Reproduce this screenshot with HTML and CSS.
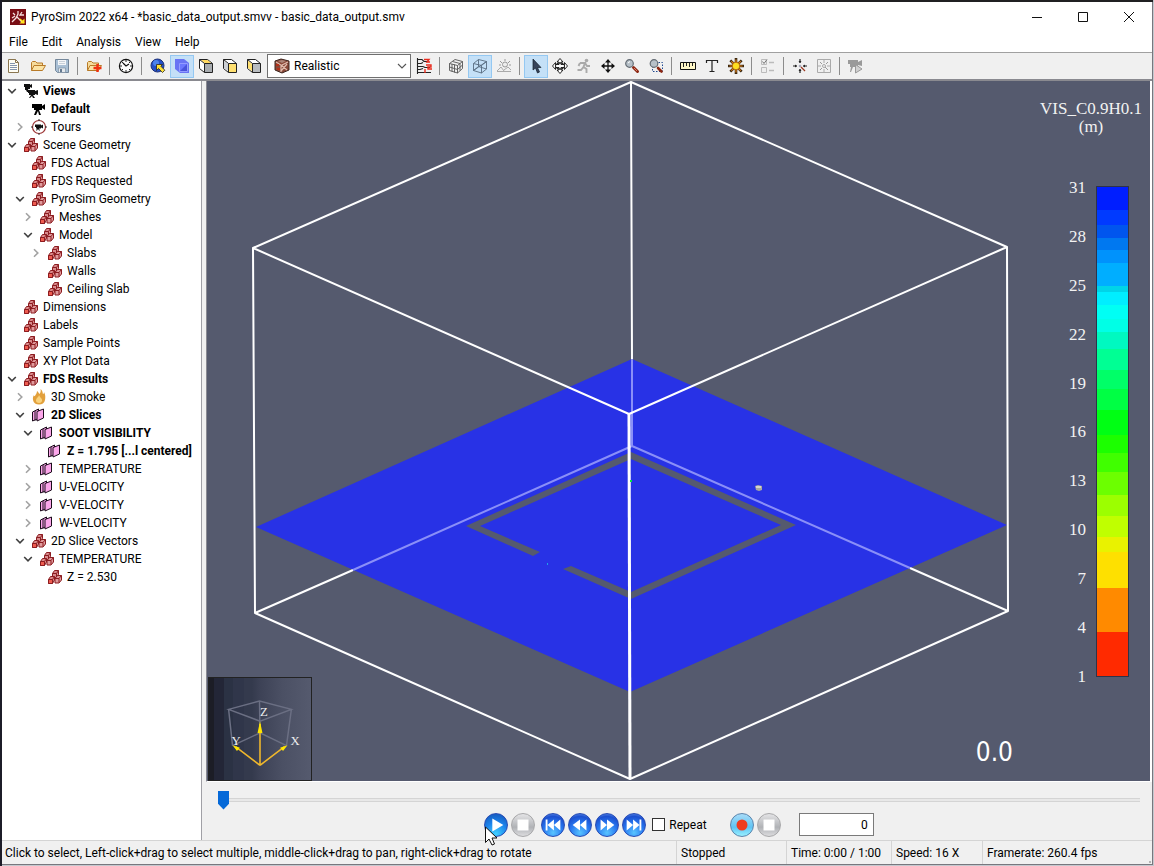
FILE: index.html
```html
<!DOCTYPE html>
<html lang="en">
<head>
<meta charset="utf-8">
<title>PyroSim 2022 x64</title>
<link rel="stylesheet" href="styles.css">
</head>
<body>
<svg class="defs" aria-hidden="true">
  <symbol id="cubes" viewBox="0 0 16 16">
    <g stroke="#8c1c20" stroke-width="1" stroke-linejoin="round">
      <path d="M5.500 4.500 7.500 1.500H11.500V5.500L9.500 8.500H5.500z" fill="#d88a8c"/><path d="M5.500 4.500h4v4M9.500 4.500l2-3" fill="none"/>
      <path d="M8 9.500 10.500 6.500H14.500V11L12 14H8z" fill="#e09a9c"/><path d="M8 9.500h4v4M12 9.500l2.500-3" fill="none"/>
      <path d="M1.500 10.500 3.500 7.500H7.500V11L5.500 14.500H1.500z" fill="#dc8c8c"/><path d="M1.500 10.500h4v4h-4z" fill="#ee5c50"/><path d="M5.500 10.500l2-3" fill="none"/>
    </g>
  </symbol>
  <symbol id="slice" viewBox="0 0 16 16">
    <g fill="#fba6ea" stroke="#1c0c1c" stroke-width="1" stroke-linejoin="round"><path d="M1.500 5 7.500 2v9.500L1.500 14z"/><path d="M6 4.500 12.500 2v9L6 14z"/><path d="M4 4v9.500" fill="none"/></g>
  </symbol>
  <symbol id="cam" viewBox="0 0 16 16">
    <path d="M1 3h10v2l3-2v6l-3-2v2H8l2 5H8L7 10l-2 4H3l2-5H3V7H1z" fill="currentColor"/>
  </symbol>
  <symbol id="cams" viewBox="0 0 16 16">
    <path d="M1 1h6v1l2-1v4L7 4v2H5l1 3H4L3 7H2V4H1z" fill="#111"/><path d="M5 7h7v1l3-1v5l-3-1v1h-2l2 3h-2l-1-2-2 2H6l2-3H6v-2H5z" fill="#111"/>
  </symbol>
  <symbol id="tour" viewBox="0 0 16 16">
    <circle cx="8" cy="8" r="6.500" fill="#fff" stroke="#9c3434" stroke-width="1.200"/><path d="M8 0v2M8 14v2M0 8h2M14 8h2" stroke="#333"/><path d="M4 5.500h6v1l2-1v4l-2-1v1H8l1 2H8L7 10l-1 1.500H5l1-2H5V8H4z" fill="#111"/>
  </symbol>
  <symbol id="flame" viewBox="0 0 16 16">
    <path d="M3 6c0 2 1 1 1.500 0S6 4 6 2c1.500 1 1.500 2 2.500 3C9.500 4 10 2 9.500 0 12 2 11.500 4 12 5c.7 0 1-1 1-2 1.500 3 1.500 5 1 8-.5 3-3 4.500-6 4.500S2.500 14 2 11c-.3-2 0-3.500 1-5z" fill="#e2a03c"/>
    <path d="M8 6c0 2-3 3-3 5.500C5 13 6 14 8 14s3.500-1.500 3-3.500C10.500 9 8.500 8 8 6z" fill="#f9d27c"/>
  </symbol>
  <symbol id="open" viewBox="0 0 10 10"><path d="M1.200 3 5 6.800 8.800 3" fill="none" stroke="#404040" stroke-width="1.600"/></symbol>
  <symbol id="shut" viewBox="0 0 10 10"><path d="M3 1.200 6.800 5 3 8.800" fill="none" stroke="#a2a2a2" stroke-width="1.600"/></symbol>
  <symbol id="folder" viewBox="0 0 16 16">
    <path d="M1.500 12.500v-8l1-1h3l1.500 1.500h5.500v2.500" fill="#f6dc9c" stroke="#b87a28"/><path d="M1.500 12.500 4 7.500h11.500l-3 5z" fill="#fbe3a4" stroke="#b87a28" stroke-linejoin="round"/>
  </symbol>
  <symbol id="box" viewBox="0 0 16 16">
    <path d="M1.500 1.500h8l5 4v9h-8l-5-4z" fill="#fff" stroke="#222" stroke-linejoin="round"/>
  </symbol>
</svg>

<main class="window">
  <header class="title">
    <svg class="logo" viewBox="0 0 16 16"><path d="M0 0h16v16H0z" fill="#780c14"/><path d="M8 2v3L6 9l-4 4M7 8l3 3 2 2M3 4l2 2M12 3l-2 3h4M2 9l3-2" fill="none" stroke="#f4dede" stroke-width="1.300"/><path d="M14.500 9.500v5h-5z" fill="#ffe41c"/><path d="m10 10 4 4" stroke="#ffe41c" stroke-width="1.500"/></svg>
    <h1>PyroSim 2022 x64 - *basic_data_output.smvv - basic_data_output.smv</h1>
    <button aria-label="Minimize"><svg viewBox="0 0 12 12"><path d="M1 6.500h10"/></svg></button>
    <button aria-label="Maximize"><svg viewBox="0 0 12 12"><path d="M1.500 1.500h9v9h-9z"/></svg></button>
    <button aria-label="Close"><svg viewBox="0 0 12 12"><path d="m1 1 10 10M11 1 1 11"/></svg></button>
  </header>
  <nav class="menu"><button>File</button><button>Edit</button><button>Analysis</button><button>View</button><button>Help</button></nav>

  <div class="tools" role="toolbar">
    <button aria-label="New"><svg viewBox="0 0 16 16"><path d="M2.500 1.500h7l3 3v10h-10z" fill="#fffdf4" stroke="#8a7650"/><path d="M9.500 1.500v3h3" fill="none" stroke="#8a7650"/><path d="M4 5.500h5M4 7.500h7M4 9.500h7M4 11.500h7" stroke="#8494ac"/></svg></button>
    <button aria-label="Open"><svg viewBox="0 0 16 16"><use href="#folder"/></svg></button>
    <button aria-label="Save"><svg viewBox="0 0 16 16"><path d="M1.500 1.500h13v13h-11l-2-2z" fill="#a9bfd4" stroke="#74879a"/><path d="M4 2h8v5H4z" fill="#f4f6f8"/><path d="M4.500 10h7v4.500h-7z" fill="#e4e8ec" stroke="#74879a" stroke-width=".6"/><path d="M5 3.500h6M5 5.500h6" stroke="#b4c0cc" stroke-width=".7"/><path d="M6 11h2v3H6z" fill="#657a90"/></svg></button>
    <i></i>
    <button aria-label="Import"><svg viewBox="0 0 16 16"><use href="#folder"/><path d="M11.500 6v8M7.500 10h8" stroke="#f03010" stroke-width="2.500"/></svg></button>
    <i></i>
    <button aria-label="Time"><svg viewBox="0 0 16 16"><circle cx="8" cy="8" r="6.600" fill="#fff" stroke="#111" stroke-width="1.200"/><path d="M8 2v2M8 12v2M2 8h2M12 8h2M4 4l1 1M11 11l1 1M12 4l-1 1M4 12l1-1" stroke="#222"/><path d="M5 5l3 3 3-2" fill="none" stroke="#111" stroke-width="1.200"/></svg></button>
    <i></i>
    <button aria-label="Reset view"><svg viewBox="0 0 16 16"><circle cx="7.500" cy="7.500" r="6.500" fill="#2450c8" stroke="#1c3078"/><circle cx="6" cy="5" r="3" fill="#4c82ec"/><path d="M6.500 6.500h6L10.800 8.200l4 4-2.300 2.300-4-4-2 2z" fill="#ffe138" stroke="#222" stroke-width=".8"/></svg></button>
    <button class="on" aria-label="Shaded"><svg viewBox="0 0 16 16"><path d="M1 1h9l5 4v10H6l-5-4z" fill="#6974f4"/><path d="M5.500 5.500h8v8h-8z" fill="#4853dc" stroke="#939cff"/><path d="M6 6h7l-7 7z" fill="#6c78ff"/></svg></button>
    <button aria-label="Top"><svg viewBox="0 0 16 16"><use href="#box"/><path d="M3 2h6.500L13 5H6.500z" fill="#ffd860"/><path d="M7 6h7v8H7z" fill="#a8acb0"/><path d="M1.500 1.500l5 4h8M6.500 5.500v9" fill="none" stroke="#222"/></svg></button>
    <button aria-label="Front"><svg viewBox="0 0 16 16"><use href="#box"/><path d="M7 6h7v8H7z" fill="#ffe070"/><path d="M2 2.500l4 3.500v7l-4-3z" fill="#ccd0d4"/><path d="M1.500 1.500l5 4h8M6.500 5.500v9" fill="none" stroke="#222"/></svg></button>
    <button aria-label="Side"><svg viewBox="0 0 16 16"><use href="#box"/><path d="M2 2.500l4 3.500v7l-4-3z" fill="#ffe070"/><path d="M7 6h7v8H7z" fill="#b8bcc0"/><path d="M1.500 1.500l5 4h8M6.500 5.500v9" fill="none" stroke="#222"/></svg></button>
    <div class="combo">
      <svg class="brick" viewBox="0 0 16 16"><path d="M1 3 7 1l8 2v9l-7 3-7-3z" fill="#8a4838" stroke="#3c241e"/><path d="M2 4l5 3v7M8 7l6-3M7 7l6 5M13 6l-6 7" fill="none" stroke="#e0bcae" stroke-width="1.200"/><path d="M2 6h3v2H2zM3 10h3v2H3z" fill="#b43018"/><path d="m4 3 4-1 4 1-4 2z" fill="#aa8478"/></svg>
      <select aria-label="Display style"><option>Realistic</option></select>
      <svg class="chev" viewBox="0 0 10 10"><path d="M1 3l4 4 4-4" fill="none" stroke="#555" stroke-width="1.100"/></svg>
    </div>
    <button aria-label="Profiles"><svg viewBox="0 0 16 16"><path d="M1.500 0v16M1 1.500h5l2 2h4M1 5.500h4l2-1M1 8.500h6l2 1h5M1 11.500h3l3-1M1 14.500h14" fill="none" stroke="#222" stroke-width="1.100"/><path d="M8 1.500h5l-2 2.500h3M10 7h5v2h-3v2h4M9 11v4" fill="none" stroke="#e82a1c" stroke-width="1.400"/></svg></button>
    <i></i>
    <button aria-label="Mesh grid"><svg viewBox="0 0 16 16"><path d="M1.500 5.500 7 1.500l7.500 2v7l-5 4.500-8-2.500zM1.500 5.500l8 2 5-4M9.500 7.500V15M4 6v7.500M6.500 6.500v8M1.500 9l8 2.500 5-4.500M12 5.500v7M4.500 3.500l7.500 2" fill="none" stroke="#555" stroke-width=".9"/></svg></button>
    <button class="on" aria-label="Outline"><svg viewBox="0 0 16 16"><path d="M1.500 5.500l5-4 8 2v7.500l-5 4-8-2.500zM1.500 5.500l8 2 5-4M9.500 7.500V15M6.500 1.500v7l8 2.500M6.500 8.500l-5 4M1.500 12.500l13-9" fill="none" stroke="#586c80" stroke-width=".9"/></svg></button>
    <button aria-label="Background"><svg viewBox="0 0 16 16"><path d="M1 13.500h14M1 13l4-4 3 4M8 12l4-3 3 3" fill="none" stroke="#aaa"/><circle cx="9" cy="6.500" r="2.500" fill="#eee" stroke="#999"/><path d="M9 1v2M4 3l2 2M14 3l-2 2M3 7h2M13 7h2" stroke="#999"/></svg></button>
    <i></i>
    <button class="on" aria-label="Select"><svg viewBox="0 0 16 16"><path d="M5 1v11l2.500-2 2 5 2-1-2-4.500H13z" fill="#35435a" stroke="#16202c" stroke-width=".7"/></svg></button>
    <button aria-label="Orbit"><svg viewBox="0 0 16 16"><path d="M8 .5 11 4H9v2.500h3.500V4.500L15.500 8l-3 3.500v-2H9V12h2l-3 3.500L5 12h2V9.500H3.500v2L.5 8l3-3.500v2H7V4H5z" fill="#fff" stroke="#111" stroke-width=".9"/><ellipse cx="8" cy="8" rx="4.500" ry="3" fill="none" stroke="#111"/></svg></button>
    <button aria-label="Roam"><svg viewBox="0 0 16 16"><circle cx="10.500" cy="2.500" r="1.800" fill="#aaa"/><path d="M4 5h5L7.500 9l3 2v4M7.500 9 5 12H1.500M9 5l2 3h3M4 5 2.500 8" fill="none" stroke="#aaa" stroke-width="1.900"/></svg></button>
    <button aria-label="Pan"><svg viewBox="0 0 16 16"><path d="M8 2v12M2 8h12" stroke="#111" stroke-width="1.300"/><path d="M8 1 11 4.500H5zM8 15 5 11.500h6zM1 8l3.500-3v6zM15 8l-3.500 3V5z" fill="#111"/></svg></button>
    <button aria-label="Zoom"><svg viewBox="0 0 16 16"><path d="m9.500 9.500 4 4" stroke="#8c2814" stroke-width="3" stroke-linecap="round"/><path d="m10 10 3 3" stroke="#e0806c"/><circle cx="5.500" cy="5.500" r="3.800" fill="#b6c0c8" stroke="#646c74" stroke-width="1.200"/><path d="M4 5l2-1.500" stroke="#fff"/></svg></button>
    <button aria-label="Zoom box"><svg viewBox="0 0 16 16"><path d="M4.500 4.500h10v9h-10z" fill="none" stroke="#204890" stroke-dasharray="1.500 1.500"/><path d="m10 10 3.500 3.500" stroke="#8c2814" stroke-width="2.600" stroke-linecap="round"/><circle cx="6" cy="5.500" r="3.800" fill="#b6c0c8" stroke="#646c74" stroke-width="1.200"/></svg></button>
    <i></i>
    <button aria-label="Measure"><svg viewBox="0 0 16 16"><path d="M.5 4.500h15v7H.5z" fill="#fff8c8" stroke="#111"/><path d="M3.500 5v4M6.500 5v3M9.500 5v4M12.500 5v3" stroke="#222"/></svg></button>
    <button aria-label="Label"><svg viewBox="0 0 16 16"><path d="M2.500 5V2.500h11V5M8 2.500v11M5.500 13.500h5" fill="none" stroke="#222" stroke-width="1.200"/></svg></button>
    <button aria-label="Light"><svg viewBox="0 0 16 16"><path d="M8 0v16M0 8h16M2.300 2.300l11.400 11.400M13.700 2.300 2.300 13.700" stroke="#3c2810" stroke-width="2.600"/><path d="M8 1.500v13M1.500 8h13M3.300 3.300l9.400 9.400M12.700 3.300l-9.400 9.400" stroke="#e08018" stroke-width="1.200"/><circle cx="8" cy="8" r="3.800" fill="#ffe020" stroke="#b06814"/></svg></button>
    <i></i>
    <button aria-label="Options"><svg viewBox="0 0 16 16"><path d="M1.500 1.500h5v5h-5zM1.500 9.500h5v5h-5z" fill="#eee" stroke="#bbb"/><path d="m2.500 3.500 1.500 2 3-4" fill="none" stroke="#777"/><path d="M9 4.500h5M9 12.500h5" stroke="#bbb" stroke-width="1.500"/></svg></button>
    <i></i>
    <button aria-label="Center"><svg viewBox="0 0 16 16"><path d="M8 1v4M8 11v4M1 8h4M11 8h4" stroke="#222" stroke-width="1.200"/><path d="M6.500 3h3L8 5zM6.500 13h3L8 11zM3 6.500v3L5 8zM13 6.500v3L11 8z" fill="#222"/><circle cx="8" cy="8" r="1.300" fill="#aab"/><path d="m9 9 4 4" stroke="#9c3820" stroke-width="1.300"/></svg></button>
    <button aria-label="Fit"><svg viewBox="0 0 16 16"><path d="M1.500 1.500h13v13h-13z" fill="none" stroke="#aaa"/><path d="M8 1v4M8 11v4M1 8h4M11 8h4" stroke="#aaa"/><path d="M4 4l2 2M12 4l-2 2M4 12l2-2M9 9l3 3" stroke="#999"/><circle cx="8" cy="8" r="1.500" fill="none" stroke="#aaa"/></svg></button>
    <i></i>
    <button aria-label="Play tour"><svg viewBox="0 0 16 16"><path d="M0 2h10v2l4-2v6l-4-1v2H5l-2 5H2l1-5H2V6H0z" fill="#9a9a9a"/><path d="M7.500 6.500 14 11l-6.500 4z" fill="#d0d0d0" stroke="#999"/></svg></button>
  </div>

  <div class="body">
    <aside class="side">
      <ul class="tree">
        <li><div class="row b"><button aria-label="Collapse"><svg><use href="#open"/></svg></button><svg><use href="#cams"/></svg><span>Views</span></div>
          <ul>
            <li><div class="row leaf b"><svg><use href="#cam"/></svg><span>Default</span></div></li>
            <li><div class="row"><button aria-label="Expand"><svg><use href="#shut"/></svg></button><svg><use href="#tour"/></svg><span>Tours</span></div></li>
          </ul></li>
        <li><div class="row"><button aria-label="Collapse"><svg><use href="#open"/></svg></button><svg><use href="#cubes"/></svg><span>Scene Geometry</span></div>
          <ul>
            <li><div class="row leaf"><svg><use href="#cubes"/></svg><span>FDS Actual</span></div></li>
            <li><div class="row leaf"><svg><use href="#cubes"/></svg><span>FDS Requested</span></div></li>
            <li><div class="row"><button aria-label="Collapse"><svg><use href="#open"/></svg></button><svg><use href="#cubes"/></svg><span>PyroSim Geometry</span></div>
              <ul>
                <li><div class="row"><button aria-label="Expand"><svg><use href="#shut"/></svg></button><svg><use href="#cubes"/></svg><span>Meshes</span></div></li>
                <li><div class="row"><button aria-label="Collapse"><svg><use href="#open"/></svg></button><svg><use href="#cubes"/></svg><span>Model</span></div>
                  <ul>
                    <li><div class="row"><button aria-label="Expand"><svg><use href="#shut"/></svg></button><svg><use href="#cubes"/></svg><span>Slabs</span></div></li>
                    <li><div class="row leaf"><svg><use href="#cubes"/></svg><span>Walls</span></div></li>
                    <li><div class="row leaf"><svg><use href="#cubes"/></svg><span>Ceiling Slab</span></div></li>
                  </ul></li>
              </ul></li>
          </ul></li>
        <li><div class="row leaf"><svg><use href="#cubes"/></svg><span>Dimensions</span></div></li>
        <li><div class="row leaf"><svg><use href="#cubes"/></svg><span>Labels</span></div></li>
        <li><div class="row leaf"><svg><use href="#cubes"/></svg><span>Sample Points</span></div></li>
        <li><div class="row leaf"><svg><use href="#cubes"/></svg><span>XY Plot Data</span></div></li>
        <li><div class="row b"><button aria-label="Collapse"><svg><use href="#open"/></svg></button><svg><use href="#cubes"/></svg><span>FDS Results</span></div>
          <ul>
            <li><div class="row"><button aria-label="Expand"><svg><use href="#shut"/></svg></button><svg><use href="#flame"/></svg><span>3D Smoke</span></div></li>
            <li><div class="row b"><button aria-label="Collapse"><svg><use href="#open"/></svg></button><svg><use href="#slice"/></svg><span>2D Slices</span></div>
              <ul>
                <li><div class="row b"><button aria-label="Collapse"><svg><use href="#open"/></svg></button><svg><use href="#slice"/></svg><span>SOOT VISIBILITY</span></div>
                  <ul><li><div class="row leaf b"><svg><use href="#slice"/></svg><span>Z = 1.795 [...l centered]</span></div></li></ul></li>
                <li><div class="row"><button aria-label="Expand"><svg><use href="#shut"/></svg></button><svg><use href="#slice"/></svg><span>TEMPERATURE</span></div></li>
                <li><div class="row"><button aria-label="Expand"><svg><use href="#shut"/></svg></button><svg><use href="#slice"/></svg><span>U-VELOCITY</span></div></li>
                <li><div class="row"><button aria-label="Expand"><svg><use href="#shut"/></svg></button><svg><use href="#slice"/></svg><span>V-VELOCITY</span></div></li>
                <li><div class="row"><button aria-label="Expand"><svg><use href="#shut"/></svg></button><svg><use href="#slice"/></svg><span>W-VELOCITY</span></div></li>
              </ul></li>
            <li><div class="row"><button aria-label="Collapse"><svg><use href="#open"/></svg></button><svg><use href="#cubes"/></svg><span>2D Slice Vectors</span></div>
              <ul>
                <li><div class="row"><button aria-label="Collapse"><svg><use href="#open"/></svg></button><svg><use href="#cubes"/></svg><span>TEMPERATURE</span></div>
                  <ul><li><div class="row leaf"><svg><use href="#cubes"/></svg><span>Z = 2.530</span></div></li></ul></li>
              </ul></li>
          </ul></li>
      </ul>
    </aside>

    <section class="work">
      <div class="view">
        <svg class="scene" viewBox="207 81 943 700">
          <path d="M632 359 1007 525 630 692 256 527z" fill="#2832e6"/>
          <path d="M466 526 631 452 796 525 631 599 563 569 571 566 631 592 781 525 631 459 480 526 540 552 533 556z" fill="#555a6e"/>
          <g fill="none" stroke="#fff" stroke-width="2" stroke-linejoin="round">
            <path d="M631 82 632 359M353 570 255 613M910 568 1008 611"/>
            <path d="M632 359V446M353 570 632 446 910 568" stroke="#8a8ff8"/>
            <path d="M631 82 253 248 629 414 1007 247zM253 248 255 613 630 779 1008 611 1007 247M629 414 630 779"/>
          </g>
          <path d="M629 414 630 779" stroke="#fff" stroke-width="3"/>
          <path d="M630 480h2v2h-2z" fill="#00e840"/><path d="M547 563h1v2h-1z" fill="#20a0e8"/>
          <path d="M755 486l3-1 4 1v4l-3 1-3-1z" fill="#a8a8a0"/><path d="M756 486h5v2h-5z" fill="#d4d4cc"/>
        </svg>
        <div class="caption">VIS_C0.9H0.1<br>(m)</div>
        <div class="legend">
          <ol><li>31</li><li>28</li><li>25</li><li>22</li><li>19</li><li>16</li><li>13</li><li>10</li><li>7</li><li>4</li><li>1</li></ol>
          <svg viewBox="0 187 32 489" preserveAspectRatio="none" shape-rendering="crispEdges">
            <path d="M0 187h32v23H0z" fill="#001eff"/><path d="M0 210h32v15H0z" fill="#003aff"/><path d="M0 225h32v13H0z" fill="#0055ee"/><path d="M0 238h32v12H0z" fill="#0078f0"/><path d="M0 250h32v13H0z" fill="#0092fc"/><path d="M0 263h32v23H0z" fill="#00aeff"/><path d="M0 286h32v6H0z" fill="#00d4e8"/><path d="M0 292h32v13H0z" fill="#00eeff"/><path d="M0 305h32v14H0z" fill="#00fff4"/><path d="M0 319h32v13H0z" fill="#00ffe6"/><path d="M0 332h32v17H0z" fill="#00f9c0"/><path d="M0 349h32v21H0z" fill="#00ff94"/><path d="M0 370h32v19H0z" fill="#00ff68"/><path d="M0 389h32v21H0z" fill="#00ff44"/><path d="M0 410h32v25H0z" fill="#00ff14"/><path d="M0 435h32v18H0z" fill="#1cff00"/><path d="M0 453h32v19H0z" fill="#40ff00"/><path d="M0 472h32v23H0z" fill="#6cff00"/><path d="M0 495h32v21H0z" fill="#9cff00"/><path d="M0 516h32v21H0z" fill="#c0ff00"/><path d="M0 537h32v15H0z" fill="#e9f200"/><path d="M0 552h32v36H0z" fill="#fee000"/><path d="M0 588h32v44H0z" fill="#ff8a00"/><path d="M0 632h32v44H0z" fill="#ff2a00"/>
          </svg>
        </div>
        <output class="clock">0.0</output>
        <svg class="axes" viewBox="208 677 104 104">
          <g fill="none" stroke="#6b6f83" stroke-width="1.500"><path d="M228 709 259.500 700.500 292 709 260 721zM228 709 232 746M292 709 287 746M259.500 700.500 260 733M232 746 260 733 287 746"/></g>
          <path d="M260 766 235 747M260 766 285 747M260 766V724" stroke="#f0b82c" stroke-width="1.600"/>
          <path d="M260 721l2.500 12h-5zM232 745.500l7.500 2.500-3 3.500zM288 745.500l-7.500 2.500 3 3.500z" fill="#ffe600"/>
          <g fill="#eee" font-family="Liberation Serif, serif" font-size="13"><text x="260" y="716">Z</text><text x="231" y="745">Y</text><text x="291" y="745">X</text></g>
        </svg>
      </div>

      <div class="player">
        <input class="seek" type="range" min="0" max="60" value="0" aria-label="Time position">
        <div class="controls">
          <div class="group">
            <button class="ball play" aria-label="Play"><svg viewBox="0 0 24 24"><path d="m8 5 12 7-12 7z"/></svg>
              <svg class="cursor" viewBox="0 0 12 20"><path d="M.5 1v15.500L4 13l3 6 2.500-1-2.500-6h5z" fill="#fff" stroke="#111"/></svg></button>
            <button class="ball gray" aria-label="Stop"><svg viewBox="0 0 24 24"><path d="M6 6h12v12H6z"/></svg></button>
          </div>
          <div class="group">
            <button class="ball" aria-label="First"><svg viewBox="0 0 24 24"><path d="M4 6h2v12H4zM13 6v12l-7-6zM20 6v12l-7-6z"/></svg></button>
            <button class="ball" aria-label="Slower"><svg viewBox="0 0 24 24"><path d="M12 6v12l-8-6zM19 6v12l-7-6z"/></svg></button>
            <button class="ball" aria-label="Faster"><svg viewBox="0 0 24 24"><path d="M5 6v12l7-6zM12 6v12l8-6z"/></svg></button>
            <button class="ball" aria-label="Last"><svg viewBox="0 0 24 24"><path d="M4 6v12l7-6zM11 6v12l7-6zM18 6h2v12h-2z"/></svg></button>
          </div>
          <label><input type="checkbox">Repeat</label>
          <div class="group rec">
            <button class="ball cyan" aria-label="Record"><svg viewBox="0 0 24 24"><circle cx="12" cy="12" r="6"/></svg></button>
            <button class="ball gray" aria-label="Stop recording"><svg viewBox="0 0 24 24"><path d="M6 6h12v12H6z"/></svg></button>
          </div>
          <input class="frame" type="text" value="0" aria-label="Frame">
        </div>
      </div>
    </section>
  </div>

  <footer class="status">
    <span class="hint">Click to select, Left-click+drag to select multiple, middle-click+drag to pan, right-click+drag to rotate</span>
    <span class="state">Stopped</span><span class="time">Time: 0:00 / 1:00</span><span class="speed">Speed: 16 X</span><span class="rate">Framerate: 260.4 fps</span>
  </footer>
</main>
</body>
</html>
```
FILE: styles.css
```css
* { box-sizing: border-box; }
body {
  margin: 0;
  height: 100vh;
  padding: 2px 1px 1px 2px;
  display: flex;
  background: linear-gradient(90deg, #1c1c28 2px, #c4c8ce 2px);
  color: #000;
  font: 12px/18px Roboto, "Open Sans", sans-serif;
}
button, input, select { font: inherit; color: inherit; }
button { border: 0; padding: 0; background: none; }
ul, ol { list-style: none; margin: 0; padding: 0; }
.defs { position: absolute; width: 0; height: 0; }

.window {
  flex: 1;
  min-width: 0;
  display: flex;
  flex-direction: column;
  background: #f0f0f0;
  border-right: 1px solid #77777e;
  border-bottom: 1px solid #77777e;
  box-shadow: 0 -2px #202022;
}
.title { display: flex; align-items: center; height: 30px; padding-left: 8px; background: #fff; }
.title h1 { flex: 1; margin: 0 0 0 5px; font-size: 12px; font-weight: 400; white-space: nowrap; }
.title button { width: 46px; height: 30px; display: grid; place-items: center; }
.title button svg { width: 12px; height: 12px; fill: none; stroke: #111; }
.logo { width: 16px; height: 16px; }

.menu { display: flex; height: 20px; background: #fff; }
.menu button { padding: 0 7px; }

.tools { display: flex; align-items: center; height: 29px; border-top: 1px solid #a0a0a0; border-bottom: 2px solid #8a8a90; }
.tools button { width: 24px; height: 23px; display: grid; place-items: center; }
.tools button svg { width: 16px; height: 16px; }
.tools .on { background: #c4e0f7; border: 1px solid #94c8f2; }
.tools i { width: 1px; height: 18px; margin: 0 4px 0 3px; background: #8c8c8c; }
.combo { display: flex; align-items: center; position: relative; margin: 0 1px; width: 144px; height: 24px; }
.combo select { width: 100%; height: 100%; padding: 0 26px; border: 1px solid #707070; background: #fff; appearance: none; border-radius: 0; }
.brick { position: absolute; left: 7px; width: 16px; height: 16px; }
.chev { position: absolute; right: 4px; width: 10px; height: 10px; pointer-events: none; }

.body { flex: 1; min-height: 0; display: flex; gap: 4px; }
.side { width: 200px; background: #fff; border-right: 1px solid #a0a0a6; overflow: hidden; }
.tree { padding: 1px 0 0 5px; }
.tree ul { padding-left: 8px; }
.row { display: flex; align-items: center; height: 18px; white-space: nowrap; }
.row button { width: 10px; height: 10px; margin-right: 6px; }
.row button svg { display: block; width: 10px; height: 10px; }
.row > svg { width: 16px; height: 16px; margin-right: 4px; }
.leaf { padding-left: 16px; }
.b { font-weight: 700; }

.work { flex: 1; min-width: 0; display: flex; flex-direction: column; }
.view { flex: 1; min-height: 0; position: relative; background: #555a6e; border-left: 1px solid #8a8a92; border-right: 2px solid #fff; border-bottom: 1px solid #fff; }
.scene { display: block; width: 100%; height: 100%; }
.caption { position: absolute; top: 19px; right: 8px; color: #f2f2f2; font: 17px/18px "Liberation Serif", serif; text-align: center; }
.legend { position: absolute; top: 97px; bottom: 94px; right: 21px; display: flex; gap: 10px; }
.legend ol { display: flex; flex-direction: column; justify-content: space-between; color: #f2f2f2; font: 17px/20px "Liberation Serif", serif; text-align: right; }
.legend svg { width: 33px; height: calc(100% - 18px); margin-top: 8px; border: 1px solid #303348; }
.clock { position: absolute; right: 137px; bottom: 14px; color: #fff; font: 26px/30px "Liberation Sans Narrow", "DejaVu Sans Condensed", sans-serif; }
.axes { position: absolute; left: 1px; bottom: 0; width: 104px; height: 104px; border: 1px solid #222; background: linear-gradient(90deg, #1c1d26 5%, #232637 5% 15%, #2b3244 15% 24%, #30364a 24% 34%, #343a4d 34% 42%, #3d4256 50%, #4b5064 72%, #555a6e); }

.player { padding: 8px 12px 2px; }
.seek { display: block; width: 100%; height: 20px; margin: 0; appearance: none; background: linear-gradient(#d4d4d4 1px, #e8e8e8 1px 3px, #d4d4d4 3px) center / 100% 4px no-repeat; }
.seek::-webkit-slider-thumb { appearance: none; width: 11px; height: 19px; background: #0569d8; clip-path: polygon(0 0, 100% 0, 100% 70%, 50% 100%, 0 70%); }
.controls { display: flex; justify-content: center; align-items: center; gap: 6px; height: 27px; margin-top: 1px; }
.group { display: flex; gap: 3px; }
.rec { margin: 0 12px 0 17px; }
.ball { position: relative; width: 24px; height: 24px; border: 1px solid #284cb4; border-radius: 50%; background: radial-gradient(circle at 50% 85%, #58c4ff, #2878f0 45%, #1c50d0 75%, #78a8f4); }
.ball svg { display: block; width: 22px; height: 22px; fill: #fff; }
.play { background: radial-gradient(circle at 50% 90%, #40d0ff, #1c84ec 50%, #1660c4 85%); }
.gray { border-color: #a8a8aa; background: linear-gradient(#e4e4e6, #b0b2b6 60%, #dcdcde); }
.cyan { border-color: #5c84ac; background: linear-gradient(#a8dcf8, #60c4f4 60%, #98f0ff); }
.cyan svg { fill: #f03c20; }
.ball .cursor { position: absolute; left: 0; top: 12px; width: 12px; height: 20px; }
.controls label { display: flex; align-items: center; gap: 4px; }
.controls label input { appearance: none; width: 13px; height: 13px; margin: 0; border: 1px solid #333; background: #fff; }
.frame { width: 75px; height: 23px; padding: 0 5px; border: 1px solid #7a7a7a; border-radius: 0; background: #fff; text-align: right; }

.status { display: flex; height: 24px; border-top: 1px solid #d4d4d4; line-height: 25px; white-space: nowrap; background: radial-gradient(circle, #b4b4b4 1px, transparent 1px) right bottom / 4px 4px no-repeat; }
.status span { padding-left: 4px; border-left: 1px solid #d4d4d4; }
.status .hint { flex: 1; min-width: 0; padding-left: 3px; border-left: 0; overflow: hidden; }
.state { width: 110px; }
.time { width: 105px; }
.speed { width: 91px; }
.rate { width: 170px; }
```
